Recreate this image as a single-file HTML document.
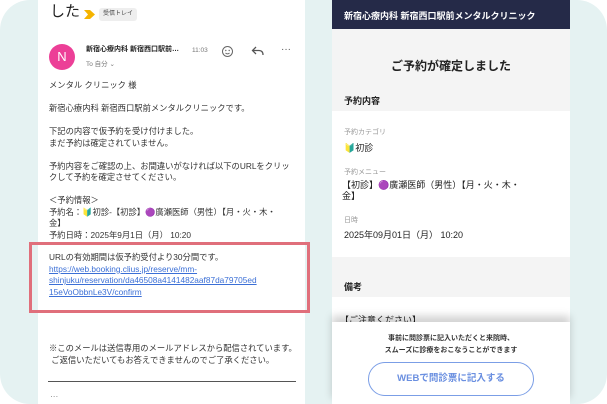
<!DOCTYPE html>
<html><head><meta charset="utf-8"><style>
*{margin:0;padding:0;box-sizing:border-box}
body{width:607px;height:404px;overflow:hidden;background:#fff;font-family:"Liberation Sans","Noto Sans CJK JP",sans-serif;position:relative}
.bg{position:absolute;left:0;top:0;width:607px;height:404px;background:#e5f2f2;border-radius:30px}
.mail{position:absolute;left:38px;top:0;width:267px;height:404px;background:#fff;color:#333;font-size:8.3px;line-height:11.5px}
.abs{position:absolute}
.right{position:absolute;left:332px;top:0;width:238px;height:404px;background:#fff}
.hd{position:absolute;left:0;top:0;width:238px;height:29px;background:#252a48;color:#fff;font-size:9px;font-weight:bold;padding:9px 0 0 12px}
.g1{position:absolute;left:0;top:29px;width:238px;height:82px;background:#f4f4f4}
.g2{position:absolute;left:0;top:257px;width:238px;height:40px;background:#f4f4f4}
.lab{font-size:7px;color:#999}
.val{font-size:9px;color:#222}
.sheet{position:absolute;left:0;top:322px;width:238px;height:82px;background:#fff;box-shadow:0 -6px 8px rgba(0,0,0,.18)}
</style></head><body>
<div class="bg"></div>
<div class="mail">
 <div class="abs" style="left:12px;top:2px;font-size:15px;line-height:20px;color:#222">した</div>
 <svg class="abs" style="left:46px;top:10px" width="12" height="9"><path d="M0 0H6L11 4.5L6 9H0L4 4.5Z" fill="#f5b400"/></svg>
 <div class="abs" style="left:61px;top:8px;background:#eee;border-radius:3px;font-size:6px;line-height:9px;padding:2px 4px;color:#444">受信トレイ</div>
 <div class="abs" style="left:11px;top:44px;width:26px;height:26px;border-radius:50%;background:#ec3f97;color:#fff;font-size:13px;text-align:center;line-height:26px">N</div>
 <div class="abs" style="left:48px;top:44px;font-size:7px;font-weight:bold;color:#222">新宿心療内科 新宿西口駅前…</div>
 <div class="abs" style="left:154px;top:45px;font-size:6.5px;color:#777">11:03</div>
 <div class="abs" style="left:48px;top:59px;font-size:6.5px;color:#777">To 自分 ⌄</div>
 <svg class="abs" style="left:183px;top:45px" width="13" height="13"><circle cx="6.5" cy="6.5" r="5" fill="none" stroke="#666" stroke-width="1"/><circle cx="4.8" cy="5.5" r=".7" fill="#666"/><circle cx="8.2" cy="5.5" r=".7" fill="#666"/><path d="M4.5 8Q6.5 9.8 8.5 8" fill="none" stroke="#666"/></svg>
 <svg class="abs" style="left:213px;top:45px" width="14" height="12"><path d="M5 2L1.5 5.5L5 9M1.5 5.5H8Q12 5.5 12 10" fill="none" stroke="#555" stroke-width="1.3"/></svg>
 <div class="abs" style="left:243px;top:44px;font-size:10px;color:#555">···</div>
 <div class="abs" style="left:11px;top:80px;width:245px">
  メンタル クリニック 様<br><br>新宿心療内科 新宿西口駅前メンタルクリニックです。<br><br>下記の内容で仮予約を受け付けました。<br>まだ予約は確定されていません。<br><br>予約内容をご確認の上、お間違いがなければ以下のURLをクリックして予約を確定させてください。<br><br>＜予約情報＞<br>予約名：🔰初診-【初診】🟣廣瀬医師（男性）【月・火・木・<br>金】<br>予約日時：2025年9月1日（月） 10:20
 </div>
 <div class="abs" style="left:11px;top:252px;width:235px;word-break:break-all">URLの有効期間は仮予約受付より30分間です。<br><span style="color:#3b6fd6;text-decoration:underline">https://web.booking.clius.jp/reserve/mm-<br>shinjuku/reservation/da46508a4141482aaf87da79705ed<br>15eVoObbnLe3V/confirm</span></div>
 <div class="abs" style="left:11px;top:343px;width:255px">※このメールは送信専用のメールアドレスから配信されています。<br>&nbsp;ご返信いただいてもお答えできませんのでご了承ください。</div>
 <div class="abs" style="left:10px;top:381px;width:248px;height:1px;background:#555"></div>
 <div class="abs" style="left:12px;top:391px;color:#777">···</div>
</div>
<div class="abs" style="left:29px;top:242px;width:281px;height:71px;border:3px solid #e06f7b"></div>
<div class="right">
 <div class="hd">新宿心療内科 新宿西口駅前メンタルクリニック</div>
 <div class="g1"></div>
 <div class="abs" style="left:0;top:57px;width:238px;text-align:center;font-size:12px;font-weight:bold;color:#222">ご予約が確定しました</div>
 <div class="abs" style="left:12px;top:94px;font-size:9px;font-weight:bold;color:#222">予約内容</div>
 <div class="abs lab" style="left:12px;top:127px">予約カテゴリ</div>
 <div class="abs val" style="left:12px;top:141px">🔰初診</div>
 <div class="abs lab" style="left:12px;top:167px">予約メニュー</div>
 <div class="abs val" style="left:10px;top:180px;width:228px;line-height:11px">【初診】🟣廣瀬医師（男性）【月・火・木・<br>金】</div>
 <div class="abs lab" style="left:12px;top:215px">日時</div>
 <div class="abs val" style="left:12px;top:228px">2025年09月01日（月） 10:20</div>
 <div class="g2"></div>
 <div class="abs" style="left:12px;top:280px;font-size:9px;font-weight:bold;color:#222">備考</div>
 <div class="abs val" style="left:8px;top:313px">【ご注意ください】</div>
 <div class="sheet">
  <div class="abs" style="left:0;top:11px;width:238px;text-align:center;font-size:7px;line-height:12px;color:#333;font-weight:bold">事前に問診票に記入いただくと来院時、<br>スムーズに診療をおこなうことができます</div>
  <div class="abs" style="left:36px;top:40px;width:166px;height:34px;border:1.5px solid #7b9ee6;border-radius:17px;text-align:center;line-height:31px;color:#6a8fe0;font-size:9.5px;font-weight:bold">WEBで問診票に記入する</div>
 </div>
</div>
</body></html>
